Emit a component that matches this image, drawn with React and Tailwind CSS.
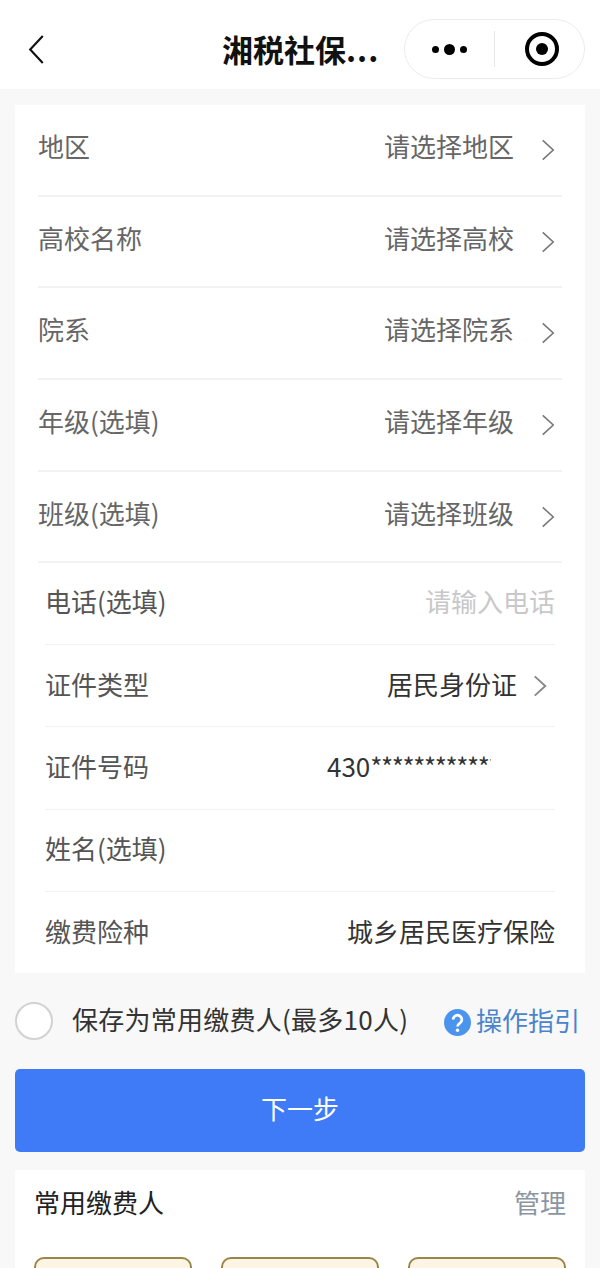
function Chevron({ className, sw = "1.8" }) {
  return (
    <svg viewBox="0 0 16 26" fill="none" stroke="currentColor" strokeWidth={sw} className={className}>
      <path d="M2 2 L14 13 L2 24" />
    </svg>
  );
}

function SelectRow({ label, value }) {
  return (
    <div className="h-[91.7px] flex items-center justify-between border-b-2 border-[#f2f2f2]">
      <span className="text-[26px] text-[#666] -mt-[9px]">{label}</span>
      <div className="flex items-center">
        <span className="text-[26px] text-[#666] -mt-[9px]">{value}</span>
        <Chevron className="w-[14px] h-[24px] ml-[27px] mr-[7px] text-[#777]" />
      </div>
    </div>
  );
}

function InputRow({ label, children, last }) {
  return (
    <div className={`h-[82.4px] flex items-center justify-between ${last ? "" : "border-b border-[#f2f2f2]"}`}>
      <span className="text-[26px] text-[#555] -mt-[5px]">{label}</span>
      {children}
    </div>
  );
}

export default function App() {
  return (
    <div className="w-[600px] h-[1268px] overflow-hidden bg-[#f8f8f8] font-['Noto_Sans_CJK_SC','Liberation_Sans',sans-serif]">
      <header className="h-[89px] bg-white flex items-center relative">
        <svg viewBox="0 0 16 30" fill="none" stroke="#111" strokeWidth="2.2" className="w-[16px] h-[29px] ml-[28px] mt-[10px]">
          <path d="M15 1 L2 15 L15 29" />
        </svg>
        <h1 className="absolute left-[222px] top-[28px] text-[31px] leading-[42px] font-bold text-[#111] whitespace-nowrap">湘税社保<span className="tracking-[1px]">...</span></h1>
        <div className="absolute left-[404px] top-[19px] w-[181px] h-[60px] rounded-full border border-[#ececec] bg-white flex items-center">
          <div className="w-[89px] flex items-center justify-center gap-[5px]">
            <span className="w-[7px] h-[7px] rounded-full bg-black" />
            <span className="w-[11px] h-[11px] rounded-full bg-black" />
            <span className="w-[7px] h-[7px] rounded-full bg-black" />
          </div>
          <span className="w-px h-[36px] bg-[#e6e6e6]" />
          <div className="flex-1 flex justify-center pl-[4px]">
            <span className="w-[34px] h-[34px] rounded-full border-[4px] border-black flex items-center justify-center">
              <span className="w-[12px] h-[12px] rounded-full bg-black" />
            </span>
          </div>
        </div>
      </header>

      <section className="mt-[16px] mx-[15px] h-[868px] bg-white">
        <div className="px-[23px]">
          <SelectRow label="地区" value="请选择地区" />
          <SelectRow label="高校名称" value="请选择高校" />
          <SelectRow label="院系" value="请选择院系" />
          <SelectRow label="年级(选填)" value="请选择年级" />
          <SelectRow label="班级(选填)" value="请选择班级" />
        </div>
        <div className="px-[30px] -mt-[1px]">
          <InputRow label="电话(选填)">
            <span className="text-[26px] text-[#c8c8c8] -mt-[5px]">请输入电话</span>
          </InputRow>
          <InputRow label="证件类型">
            <div className="flex items-center">
              <span className="text-[26px] text-[#333] -mt-[5px]">居民身份证</span>
              <Chevron sw="2.2" className="w-[14px] h-[24px] ml-[16px] mr-[8px] text-[#888]" />
            </div>
          </InputRow>
          <InputRow label="证件号码">
            <span className="w-[164px] mr-[64px] -mt-[5px] overflow-hidden whitespace-nowrap text-[26px] text-[#333]">430<span className="tracking-[-1.4px]">************</span></span>
          </InputRow>
          <InputRow label="姓名(选填)" />
          <InputRow label="缴费险种" last>
            <span className="text-[26px] text-[#333] -mt-[5px]">城乡居民医疗保险</span>
          </InputRow>
        </div>
      </section>

      <div className="mt-[28px] mx-[15px] h-[40px] flex items-center">
        <span className="w-[38px] h-[38px] rounded-full border-2 border-[#d2d2d2] bg-white" />
        <span className="ml-[19px] -mt-[5px] text-[26px] tracking-[0.25px] text-[#333] whitespace-nowrap">保存为常用缴费人(最多10人)</span>
        <span className="ml-auto mr-[5px] flex items-center">
          <svg viewBox="0 0 28 28" className="w-[27px] h-[27px] mt-[3px]">
            <circle cx="14" cy="14" r="14" fill="#4a94ee" />
            <path d="M9.5 11 a4.5 4.5 0 1 1 7 3.7 c-1.6 1.1 -2.5 1.8 -2.5 3.5" fill="none" stroke="#fff" strokeWidth="2.8" />
            <circle cx="14" cy="22" r="1.8" fill="#fff" />
          </svg>
          <span className="ml-[5px] -mt-[3px] text-[26px] text-[#4a84cc] whitespace-nowrap">操作指引</span>
        </span>
      </div>

      <button className="block mt-[28px] mx-[15px] w-[570px] h-[83px] pb-[7px] rounded-[5px] bg-[#3f7bf7] text-white text-[26px]">下一步</button>

      <section className="mt-[18px] mx-[15px] h-[98px] bg-white px-[19px] overflow-hidden">
        <div className="h-[68px] pb-[6px] flex items-center justify-between">
          <span className="text-[26px] text-[#222]">常用缴费人</span>
          <span className="text-[26px] text-[#8c96a3]">管理</span>
        </div>
        <div className="mt-[19px] flex justify-between">
          <div className="w-[158px] h-[40px] rounded-t-[10px] border-2 border-[#9a8645] bg-[#fcf4e5]" />
          <div className="w-[158px] h-[40px] rounded-t-[10px] border-2 border-[#9a8645] bg-[#fcf4e5]" />
          <div className="w-[158px] h-[40px] rounded-t-[10px] border-2 border-[#9a8645] bg-[#fcf4e5]" />
        </div>
      </section>
    </div>
  );
}
